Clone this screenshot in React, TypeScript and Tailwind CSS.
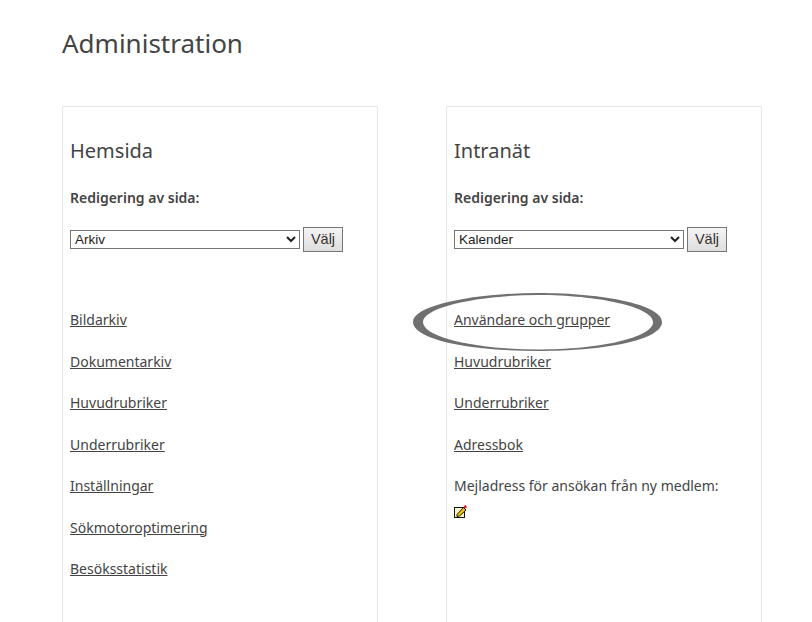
const FONT = "font-['Noto_Sans',sans-serif]";

const HOME_LINKS = [
  "Bildarkiv",
  "Dokumentarkiv",
  "Huvudrubriker",
  "Underrubriker",
  "Inställningar",
  "Sökmotoroptimering",
  "Besöksstatistik",
];

const INTRA_LINKS = ["Användare och grupper", "Huvudrubriker", "Underrubriker", "Adressbok"];

function PagePicker({ value }: { value: string }) {
  return (
    <div className="mt-[19px] flex h-[25px] items-center gap-[3px]">
      <select
        defaultValue={value}
        className="h-[19px] w-[230px] border border-[#767676] bg-white p-0 font-['Liberation_Sans',sans-serif] text-[13.5px] text-[#222]"
        style={{ appearance: "auto" }}
      >
        <option>{value}</option>
      </select>
      <button className="h-[25px] w-[40px] border border-[#767676] bg-gradient-to-b from-[#f4f4f4] to-[#dedede] font-['Liberation_Sans',sans-serif] text-[14.5px] text-[#333]">
        Välj
      </button>
    </div>
  );
}

function Panel({ title, value, children }: { title: string; value: string; children: React.ReactNode }) {
  return (
    <section className="h-[560px] w-[316px] border border-[#e8e8e8] border-b-0 px-[7px] pt-[30px]">
      <h2 className="text-[20px] leading-[28px] text-[#444]">{title}</h2>
      <p className="mt-[23px] text-[14px] leading-[20px] font-semibold text-[#444]">Redigering av sida:</p>
      <PagePicker value={value} />
      <div className="mt-[58px]">{children}</div>
    </section>
  );
}

function NavLink({ label }: { label: string }) {
  return (
    <a href="#" className="mb-[21.5px] block text-[14px] leading-[20px] text-[#444] underline">
      {label}
    </a>
  );
}

export default function App() {
  return (
    <div className={`${FONT} relative h-[622px] w-[812px] overflow-hidden bg-white pl-[62px]`}>
      <h1 className="pt-[25px] text-[26px] leading-[36px] text-[#444]">Administration</h1>
      <div className="mt-[45px] flex gap-[68px]">
        <Panel title="Hemsida" value="Arkiv">
          {HOME_LINKS.map((label) => (
            <NavLink key={label} label={label} />
          ))}
        </Panel>
        <Panel title="Intranät" value="Kalender">
          {INTRA_LINKS.map((label) => (
            <NavLink key={label} label={label} />
          ))}
          <p className="text-[14px] leading-[20px] text-[#444]">Mejladress för ansökan från ny medlem:</p>
          <svg className="mt-[9px] block" width="13" height="13" viewBox="0 0 13 13">
            <rect x="0.5" y="2.5" width="10" height="10" fill="#fdf6c8" stroke="#111" />
            <path d="M3 9.5 L9.5 2.5 L12 5 L5.5 11 L3 11.5z" fill="#f5c400" stroke="#111" strokeWidth="1" />
            <circle cx="11.3" cy="1.8" r="1.5" fill="#d8232a" />
          </svg>
        </Panel>
      </div>
      {/* hand-drawn highlight around the first intranet link */}
      <svg className="absolute left-[410px] top-[291px]" width="256" height="64" viewBox="0 0 256 64">
        <path
          fillRule="evenodd"
          fill="#707070"
          d="M3 31 C3 14 66 2 128 2 C195 2 252 14 252 31 C252 49 195 60 128 60 C62 60 3 49 3 31z M13 31 C13 47 70 58.5 128 58.5 C188 58.5 243 47 243 31 C243 16 188 4 128 4 C70 4 13 16 13 31z"
        />
      </svg>
    </div>
  );
}
